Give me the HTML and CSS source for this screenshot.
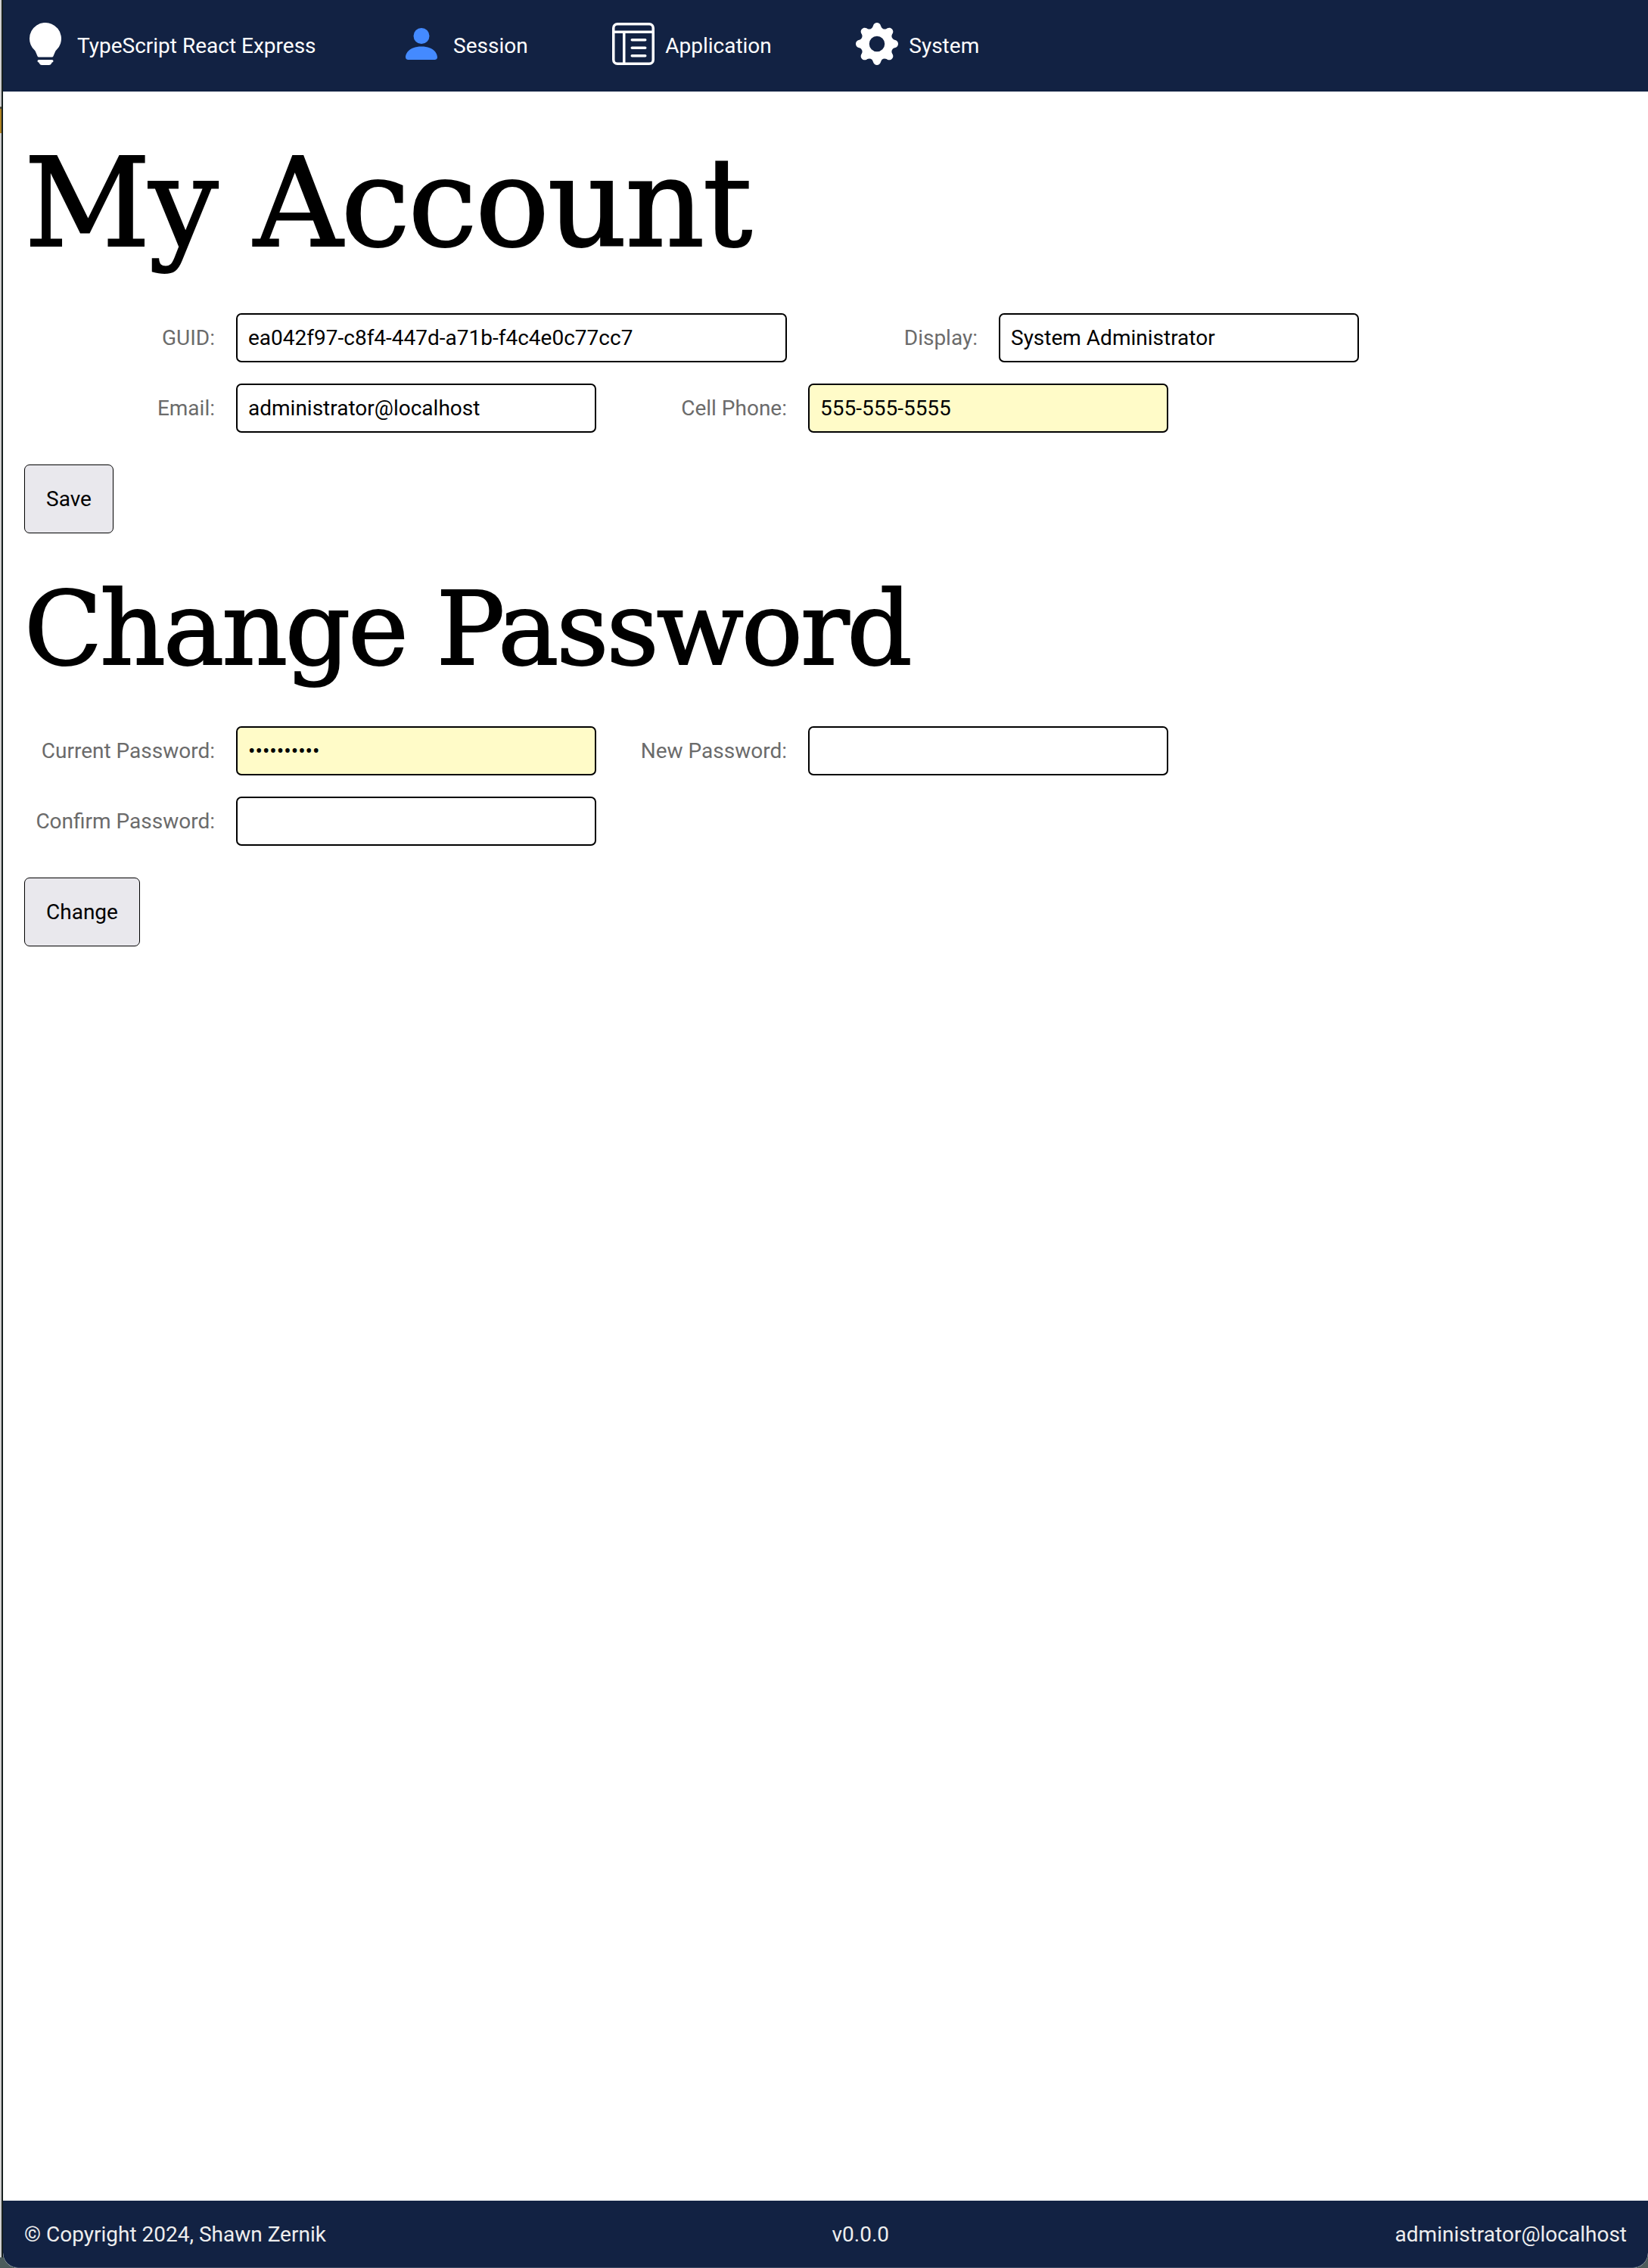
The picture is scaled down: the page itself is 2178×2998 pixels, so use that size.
FILE: index.html
```html
<!DOCTYPE html>
<html lang="en">
<head>
<meta charset="utf-8">
<title>My Account</title>
<link rel="stylesheet" href="styles.css">
</head>
<body>
<div class="backdrop"><div class="backdrop-accent"></div></div>
<div class="window">
  <header class="navbar">
    <a class="nav-item">
      <svg class="icon" viewBox="0 0 16 16"><path d="M2 6a6 6 0 1 1 10.174 4.31c-.203.196-.359.4-.453.619l-.762 1.769A.5.5 0 0 1 10.5 13h-5a.5.5 0 0 1-.46-.302l-.761-1.77a2 2 0 0 0-.453-.618A5.98 5.98 0 0 1 2 6m3 8.5a.5.5 0 0 1 .5-.5h5a.5.5 0 0 1 0 1l-.224.447a1 1 0 0 1-.894.553H6.618a1 1 0 0 1-.894-.553L5.5 15a.5.5 0 0 1-.5-.5"/></svg>
      <span>TypeScript React Express</span>
    </a>
    <a class="nav-item">
      <svg class="icon icon-active" viewBox="0 0 16 16"><path d="M3 14s-1 0-1-1 1-4 6-4 6 3 6 4-1 1-1 1zm5-6a3 3 0 1 0 0-6 3 3 0 0 0 0 6"/></svg>
      <span>Session</span>
    </a>
    <a class="nav-item">
      <svg class="icon" viewBox="0 0 16 16"><path d="M13 6.5a.5.5 0 0 0-.5-.5h-5a.5.5 0 0 0 0 1h5a.5.5 0 0 0 .5-.5m0 3a.5.5 0 0 0-.5-.5h-5a.5.5 0 0 0 0 1h5a.5.5 0 0 0 .5-.5m-.5 2.5a.5.5 0 0 1 0 1h-5a.5.5 0 0 1 0-1z"/><path d="M14 0a2 2 0 0 1 2 2v12a2 2 0 0 1-2 2H2a2 2 0 0 1-2-2V2a2 2 0 0 1 2-2zM2 1a1 1 0 0 0-1 1v1h14V2a1 1 0 0 0-1-1zM1 4v10a1 1 0 0 0 1 1h2V4zm4 0v11h9a1 1 0 0 0 1-1V4z"/></svg>
      <span>Application</span>
    </a>
    <a class="nav-item">
      <svg class="icon" viewBox="0 0 16 16"><path d="M9.405 1.05c-.413-1.4-2.397-1.4-2.81 0l-.1.34a1.464 1.464 0 0 1-2.105.872l-.31-.17c-1.283-.698-2.686.705-1.987 1.987l.169.311c.446.82.023 1.841-.872 2.105l-.34.1c-1.4.413-1.4 2.397 0 2.81l.34.1a1.464 1.464 0 0 1 .872 2.105l-.17.31c-.698 1.283.705 2.686 1.987 1.987l.311-.169a1.464 1.464 0 0 1 2.105.872l.1.34c.413 1.4 2.397 1.4 2.81 0l.1-.34a1.464 1.464 0 0 1 2.105-.872l.31.17c1.283.698 2.686-.705 1.987-1.987l-.169-.311a1.464 1.464 0 0 1 .872-2.105l.34-.1c1.4-.413 1.4-2.397 0-2.81l-.34-.1a1.464 1.464 0 0 1-.872-2.105l.17-.31c.698-1.283-.705-2.686-1.987-1.987l-.311.169a1.464 1.464 0 0 1-2.105-.872zM8 10.93a2.929 2.929 0 1 1 0-5.86 2.929 2.929 0 0 1 0 5.858z"/></svg>
      <span>System</span>
    </a>
  </header>
  <main class="content">
    <h1 class="title">My Account</h1>
    <form class="form">
      <div class="row">
        <label class="label" for="guid">GUID:</label>
        <input class="input input-wide" id="guid" type="text" value="ea042f97-c8f4-447d-a71b-f4c4e0c77cc7">
        <label class="label" for="display">Display:</label>
        <input class="input" id="display" type="text" value="System Administrator">
      </div>
      <div class="row">
        <label class="label" for="email">Email:</label>
        <input class="input" id="email" type="text" value="administrator@localhost">
        <label class="label" for="phone">Cell Phone:</label>
        <input class="input input-filled" id="phone" type="text" value="555-555-5555">
      </div>
      <button class="button" type="button">Save</button>
    </form>
    <h2 class="subtitle">Change Password</h2>
    <form class="form">
      <div class="row">
        <label class="label" for="current">Current Password:</label>
        <input class="input input-filled" id="current" type="password" value="password12">
        <label class="label" for="new">New Password:</label>
        <input class="input" id="new" type="password">
      </div>
      <div class="row">
        <label class="label" for="confirm">Confirm Password:</label>
        <input class="input" id="confirm" type="password">
      </div>
      <button class="button" type="button">Change</button>
    </form>
  </main>
  <footer class="footer">
    <span>© Copyright 2024, Shawn Zernik</span>
    <span>v0.0.0</span>
    <span>administrator@localhost</span>
  </footer>
</div>
</body>
</html>
```
FILE: styles.css
```css
* {
  box-sizing: border-box;
}

body {
  margin: 0;
  display: flex;
  height: 2998px;
  overflow: hidden;
  background: #4c5c5c;
  color: #000;
  font-family: Roboto, "Liberation Sans", sans-serif;
  font-size: 28px;
  line-height: 33px;
}

.backdrop {
  flex: none;
  width: 4px;
  height: 2984px;
  padding-top: 141px;
  background: #d0d0d0;
  border-right: 2px solid #17201f;
}

.backdrop-accent {
  height: 35px;
  background: #b08323;
  border-top: 3px solid #55503f;
}

.window {
  flex: 1;
  display: flex;
  flex-direction: column;
  background: #fff;
  border-radius: 0 0 20px 20px;
  overflow: hidden;
}

.navbar {
  flex: none;
  display: flex;
  gap: 111.5px;
  height: 121px;
  padding: 30px 28px 0;
  background: #122243;
  color: #fff;
}

.nav-item {
  display: flex;
  gap: 14px;
  height: 61px;
  align-items: flex-start;
  white-space: nowrap;
}

.nav-item span {
  padding-top: 14px;
}

.icon {
  flex: none;
  width: 56px;
  height: 56px;
  fill: #fff;
}

.icon-active {
  fill: #448aff;
}

.content {
  flex: 1;
  padding: 0 28px;
}

.title,
.subtitle {
  margin: 0;
  font-family: "Roboto Slab", "DejaVu Serif", serif;
  font-weight: 400;
  white-space: nowrap;
  -webkit-text-stroke: 2px #000;
}

.title {
  height: 293px;
  font-size: 163px;
  line-height: 295px;
  letter-spacing: -2.5px;
}

.subtitle {
  height: 255px;
  font-size: 135px;
  line-height: 253px;
  letter-spacing: -3.2px;
}

.form {
  display: flex;
  flex-direction: column;
  align-items: flex-start;
  gap: 28px;
}

.row {
  display: flex;
  align-items: center;
}

.label {
  width: 252px;
  color: #6b6b6b;
  text-align: right;
  white-space: nowrap;
}

.input {
  width: 476px;
  height: 65px;
  margin: 0 0 0 28px;
  padding: 0 14px;
  border: 2px solid #000;
  border-radius: 7px;
  background: #fff;
  color: #000;
  font: inherit;
}

.input-wide {
  width: 728px;
}

.input-filled {
  background: #fffbc8;
}

.button {
  height: 91px;
  margin-top: 14px;
  padding: 0 28px;
  border: 1px solid #000;
  border-radius: 7px;
  background: #e9e8ed;
  color: #000;
  font: inherit;
}

.footer {
  flex: none;
  display: flex;
  justify-content: space-between;
  height: 89px;
  padding: 28px 28px 0;
  border-bottom: 1px solid #3b4a63;
  border-radius: 0 0 20px 20px;
  background: #122243;
  color: #eee;
}
```
